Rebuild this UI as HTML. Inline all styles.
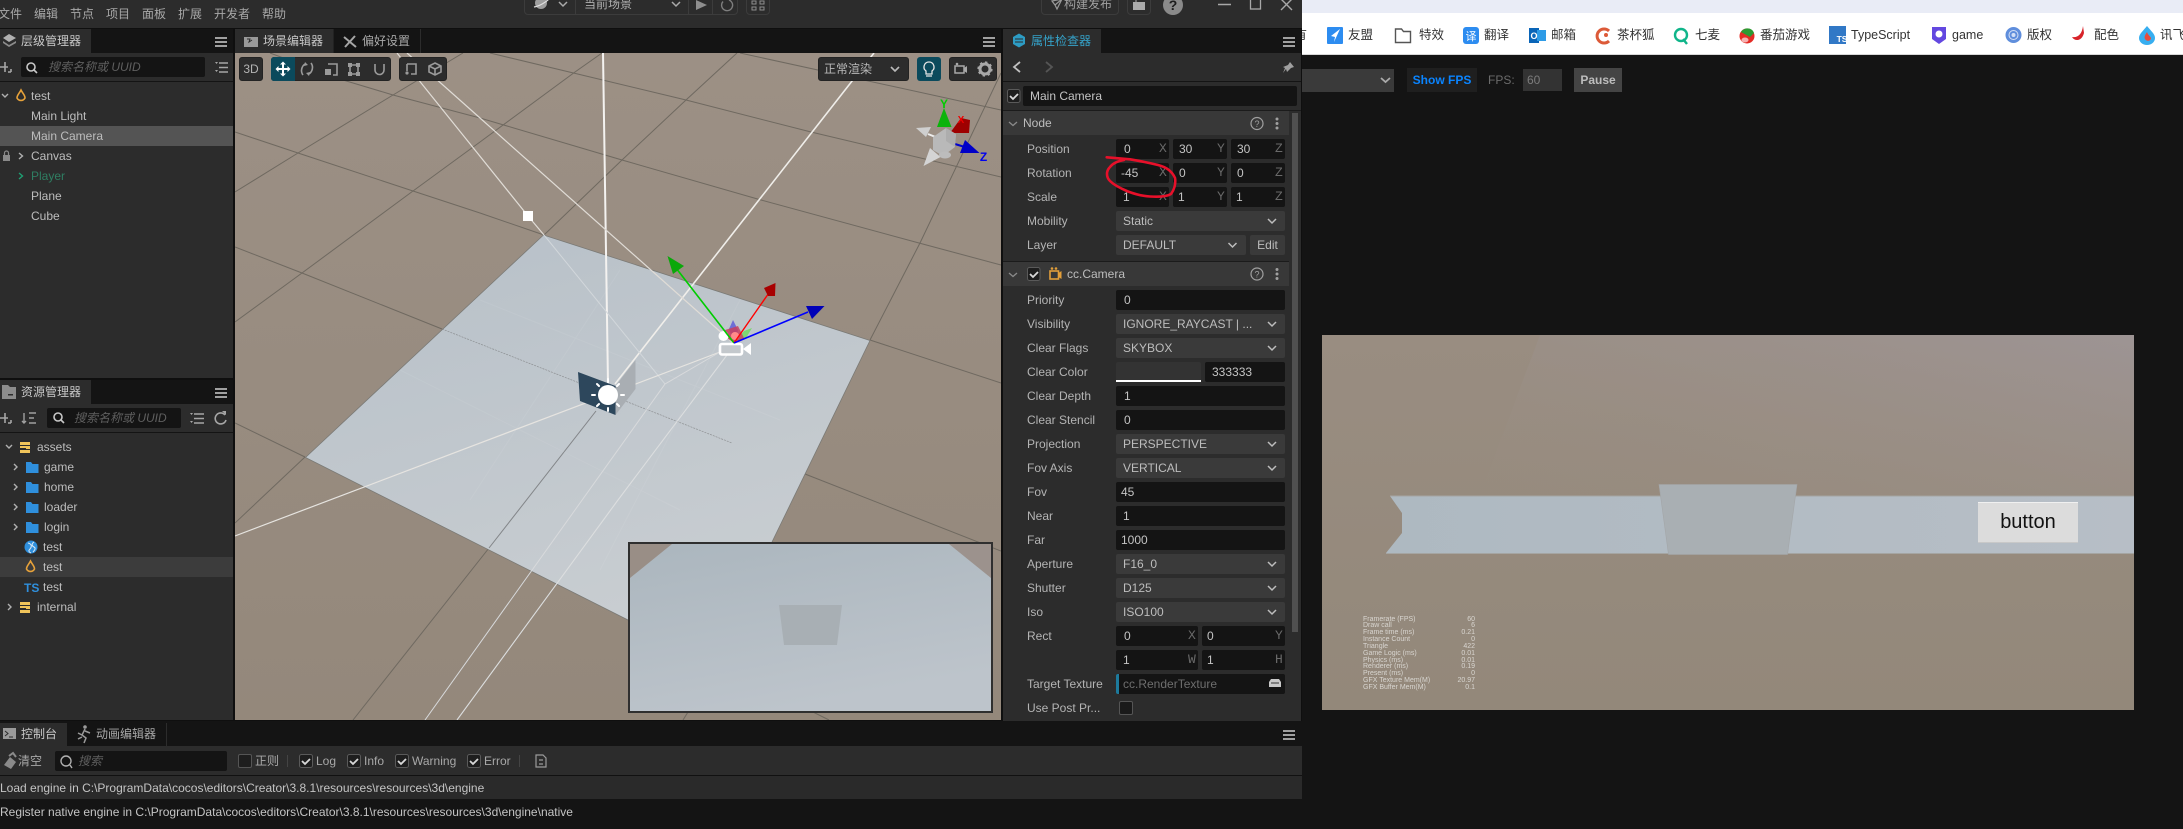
<!DOCTYPE html>
<html><head><meta charset="utf-8"><style>
html,body{margin:0;padding:0;background:#141414;}
body{position:relative;width:2183px;height:829px;overflow:hidden;font:12px "Liberation Sans","Noto Sans CJK SC",sans-serif;color:#bdbdbd;}
.a,.t,.l,.i,.s,.b{position:absolute;}
.t{white-space:nowrap;height:20px;line-height:20px;}
.l{left:1027px;height:20px;line-height:20px;white-space:nowrap;color:#b4b4b4;}
.i{background:#141414;border-radius:2px;height:20px;line-height:20px;color:#c4c4c4;white-space:nowrap;box-sizing:border-box;}
.s{background:#3a3a3a;border-radius:2px;height:20px;line-height:20px;color:#bdbdbd;left:1116px;width:169px;padding-left:7px;box-sizing:border-box;white-space:nowrap;}
.m{position:absolute;font:13px "Liberation Mono",monospace;color:#6a6a6a;height:20px;line-height:20px;}
.tb{position:absolute;background:#2c2c2c;border:1px solid #232323;border-radius:3px;box-sizing:border-box;}
.bm{position:absolute;top:25px;height:20px;line-height:20px;font-size:12.5px;color:#333;white-space:nowrap;}
.st{position:absolute;font-size:7px;line-height:7px;color:#d8d5d0;white-space:nowrap;}
</style></head><body>
<!-- browser -->
<div class="a" style="left:1302px;top:0;width:881px;height:13px;background:#e9ecf6"></div>
<div class="a" style="left:1302px;top:13px;width:881px;height:41px;background:#fff"></div>
<div class="a" style="left:1302px;top:54px;width:881px;height:1px;background:#d8d8d8"></div>
<div class="bm" style="left:1302px;width:5px;overflow:hidden;direction:rtl">有</div>
<div class="bm" style="left:1348px">友盟</div>
<div class="bm" style="left:1419px">特效</div>
<div class="bm" style="left:1484px">翻译</div>
<div class="bm" style="left:1551px">邮箱</div>
<div class="bm" style="left:1617px">茶杯狐</div>
<div class="bm" style="left:1695px">七麦</div>
<div class="bm" style="left:1760px">番茄游戏</div>
<div class="bm" style="left:1851px">TypeScript</div>
<div class="bm" style="left:1952px">game</div>
<div class="bm" style="left:2027px">版权</div>
<div class="bm" style="left:2094px">配色</div>
<div class="bm" style="left:2160px">讯飞</div>
<!-- browser toolbar -->
<div class="a" style="left:1302px;top:69px;width:92px;height:23px;background:#3a3a3a"></div>
<div class="a" style="left:1407px;top:68px;width:70px;height:24px;background:#1f1f1f;color:#0a84ff;font-weight:bold;font-size:12px;line-height:24px;text-align:center">Show FPS</div>
<div class="t" style="left:1488px;top:70px;color:#6b6b6b">FPS:</div>
<div class="a" style="left:1523px;top:69px;width:39px;height:22px;background:#333;color:#7c7c7c;line-height:22px;padding-left:4px;box-sizing:border-box">60</div>
<div class="a" style="left:1574px;top:68px;width:48px;height:24px;background:#444;color:#bdbdbd;font-weight:bold;font-size:12px;line-height:24px;text-align:center">Pause</div>
<!-- game view -->
<svg class="a" style="left:1322px;top:335px" width="812" height="375" viewBox="1322 335 812 375">
<defs><linearGradient id="gb" x1="0" y1="0" x2="0" y2="1"><stop offset="0" stop-color="#998d81"/><stop offset="1" stop-color="#93887a"/></linearGradient>
<linearGradient id="gh" x1="0" y1="0" x2="1" y2="0"><stop offset="0" stop-color="#aeb9c1"/><stop offset="1" stop-color="#b7bec6"/></linearGradient>
<linearGradient id="gl" x1="0" y1="1" x2="1" y2="0"><stop offset="0" stop-color="#9a8e82" stop-opacity="0"/><stop offset="1" stop-color="#9d9494"/></linearGradient></defs>
<rect x="1322" y="335" width="812" height="375" fill="url(#gb)"/>
<polygon points="1540,335 2134,335 2134,495 1480,495" fill="url(#gl)"/>
<polygon points="1390,496 2134,496 2134,553 1386,553 1402,533 1402,513" fill="url(#gh)"/>
<path d="M1390 496H2134M1386 553.500H2134" stroke="#a5a5a2" stroke-width="1"/>
<polygon points="1659,484.500 1797,484.500 1787.500,554.500 1668.500,554.500" fill="#a9afb3" stroke="#a3a6a8" stroke-width=".6"/>
</svg>
<div class="a" style="left:1978px;top:502px;width:100px;height:41px;background:#dcdcdc;border-top:1px solid #f0f0f0;border-bottom:1px solid #c8c8c8;box-sizing:border-box;color:#111;font:20px/39px 'Liberation Sans',sans-serif;text-align:center">button</div>
<div class="st" style="left:1363px;top:616px">Framerate (FPS)</div><div class="st" style="left:1440px;top:616px;width:35px;text-align:right">60</div>
<div class="st" style="left:1363px;top:622px">Draw call</div><div class="st" style="left:1440px;top:622px;width:35px;text-align:right">6</div>
<div class="st" style="left:1363px;top:629px">Frame time (ms)</div><div class="st" style="left:1440px;top:629px;width:35px;text-align:right">0.21</div>
<div class="st" style="left:1363px;top:636px">Instance Count</div><div class="st" style="left:1440px;top:636px;width:35px;text-align:right">0</div>
<div class="st" style="left:1363px;top:643px">Triangle</div><div class="st" style="left:1440px;top:643px;width:35px;text-align:right">422</div>
<div class="st" style="left:1363px;top:650px">Game Logic (ms)</div><div class="st" style="left:1440px;top:650px;width:35px;text-align:right">0.01</div>
<div class="st" style="left:1363px;top:657px">Physics (ms)</div><div class="st" style="left:1440px;top:657px;width:35px;text-align:right">0.01</div>
<div class="st" style="left:1363px;top:663px">Renderer (ms)</div><div class="st" style="left:1440px;top:663px;width:35px;text-align:right">0.19</div>
<div class="st" style="left:1363px;top:670px">Present (ms)</div><div class="st" style="left:1440px;top:670px;width:35px;text-align:right">0</div>
<div class="st" style="left:1363px;top:677px">GFX Texture Mem(M)</div><div class="st" style="left:1440px;top:677px;width:35px;text-align:right">20.97</div>
<div class="st" style="left:1363px;top:684px">GFX Buffer Mem(M)</div><div class="st" style="left:1440px;top:684px;width:35px;text-align:right">0.1</div>

<!-- editor window -->
<div class="a" style="left:0;top:0;width:1302px;height:829px;background:#0f0f0f"></div>
<div class="a" style="left:0;top:0;width:1302px;height:28px;background:#2c2c2c"></div>
<div class="t" style="left:-2px;top:4px;color:#a8a8a8">文件</div>
<div class="t" style="left:34px;top:4px;color:#a8a8a8">编辑</div>
<div class="t" style="left:70px;top:4px;color:#a8a8a8">节点</div>
<div class="t" style="left:106px;top:4px;color:#a8a8a8">项目</div>
<div class="t" style="left:142px;top:4px;color:#a8a8a8">面板</div>
<div class="t" style="left:178px;top:4px;color:#a8a8a8">扩展</div>
<div class="t" style="left:214px;top:4px;color:#a8a8a8">开发者</div>
<div class="t" style="left:262px;top:4px;color:#a8a8a8">帮助</div>
<!-- top toolbar -->
<div class="a" style="left:524px;top:-8px;width:214px;height:23px;border:1px solid #3c3c3c;border-radius:4px;box-sizing:border-box"></div>
<div class="a" style="left:575px;top:0;width:1px;height:15px;background:#3c3c3c"></div>
<div class="a" style="left:688px;top:0;width:1px;height:15px;background:#3c3c3c"></div>
<div class="a" style="left:712px;top:0;width:1px;height:15px;background:#3c3c3c"></div>
<div class="a" style="left:746px;top:-8px;width:24px;height:23px;border:1px solid #3c3c3c;border-radius:4px;box-sizing:border-box"></div>
<div class="a" style="left:1041px;top:-8px;width:78px;height:23px;border:1px solid #3c3c3c;border-radius:4px;box-sizing:border-box"></div>
<div class="a" style="left:1127px;top:-8px;width:24px;height:23px;border:1px solid #3c3c3c;border-radius:4px;box-sizing:border-box"></div>
<div class="t" style="left:584px;top:-6px;color:#b0b0b0">当前场景</div>
<div class="t" style="left:1064px;top:-6px;color:#a0a0a0">构建发布</div>

<!-- hierarchy -->
<div class="a" style="left:0;top:29px;width:233px;height:349px;background:#2c2c2c"></div>
<div class="a" style="left:0;top:29px;width:233px;height:24px;background:#141414"></div>
<div class="a" style="left:0;top:29px;width:91px;height:24px;background:#2c2c2c"></div>
<div class="t" style="left:21px;top:31px;color:#c8c8c8">层级管理器</div>
<div class="a" style="left:0;top:81px;width:233px;height:1px;background:#141414"></div>
<div class="a" style="left:21px;top:57px;width:184px;height:20px;background:#141414;border-radius:2px"></div>
<div class="t" style="left:48px;top:57px;color:#5f5f5f;font-style:italic">搜索名称或 UUID</div>
<div class="a" style="left:0;top:126px;width:233px;height:20px;background:#545454"></div>
<div class="t" style="left:31px;top:86px">test</div>
<div class="t" style="left:31px;top:106px">Main Light</div>
<div class="t" style="left:31px;top:126px">Main Camera</div>
<div class="t" style="left:31px;top:146px">Canvas</div>
<div class="t" style="left:31px;top:166px;color:#2f7e62">Player</div>
<div class="t" style="left:31px;top:186px">Plane</div>
<div class="t" style="left:31px;top:206px">Cube</div>

<!-- assets -->
<div class="a" style="left:0;top:380px;width:233px;height:340px;background:#2c2c2c"></div>
<div class="a" style="left:0;top:380px;width:233px;height:24px;background:#141414"></div>
<div class="a" style="left:0;top:380px;width:91px;height:24px;background:#2c2c2c"></div>
<div class="t" style="left:21px;top:382px;color:#c8c8c8">资源管理器</div>
<div class="a" style="left:0;top:432px;width:233px;height:1px;background:#141414"></div>
<div class="a" style="left:47px;top:408px;width:134px;height:20px;background:#141414;border-radius:2px"></div>
<div class="t" style="left:74px;top:408px;color:#5f5f5f;font-style:italic">搜索名称或 UUID</div>
<div class="a" style="left:0;top:557px;width:233px;height:20px;background:#3c3c3c"></div>
<div class="t" style="left:37px;top:437px">assets</div>
<div class="t" style="left:44px;top:457px">game</div>
<div class="t" style="left:44px;top:477px">home</div>
<div class="t" style="left:44px;top:497px">loader</div>
<div class="t" style="left:44px;top:517px">login</div>
<div class="t" style="left:43px;top:537px">test</div>
<div class="t" style="left:43px;top:557px">test</div>
<div class="t" style="left:43px;top:577px">test</div>
<div class="t" style="left:37px;top:597px">internal</div>

<!-- scene tabs -->
<div class="a" style="left:235px;top:29px;width:766px;height:24px;background:#141414"></div>
<div class="a" style="left:235px;top:29px;width:98px;height:24px;background:#2c2c2c"></div>
<div class="a" style="left:420px;top:29px;width:1px;height:24px;background:#2c2c2c"></div>
<div class="a" style="left:333px;top:29px;width:1px;height:24px;background:#222"></div>
<div class="t" style="left:263px;top:31px;color:#c8c8c8">场景编辑器</div>
<div class="t" style="left:362px;top:31px;color:#a8a8a8">偏好设置</div>

<!-- scene -->
<svg class="a" style="left:235px;top:53px" width="766" height="667" viewBox="235 53 766 667">
<defs>
<linearGradient id="sb" x1="0" y1="0" x2="0" y2="1"><stop offset="0" stop-color="#9c9085"/><stop offset="1" stop-color="#94887b"/></linearGradient>
<linearGradient id="pl" x1="0" y1="0" x2=".4" y2="1"><stop offset="0" stop-color="#b7c0c8"/><stop offset="1" stop-color="#c8cdd1"/></linearGradient>
<linearGradient id="pv" x1="0" y1="0" x2=".4" y2="1"><stop offset="0" stop-color="#abb6be"/><stop offset="1" stop-color="#bdc4cb"/></linearGradient>
</defs>
<rect x="235" y="53" width="766" height="667" fill="url(#sb)"/>
<g stroke="#6f6960" stroke-width="1" fill="none">
<path d="M490 53L686 100L811 132L1001 177"/>
<path d="M740 53L1001 110"/>
<path d="M270 53L343 80L393 95L480 118L622 160L761 200L919 243L1001 265"/>
<path d="M235 132L298 153L413 191L480 213L544 235"/>
<path d="M870 340L1001 383"/>
<path d="M235 247L302 273L442 329"/>
<path d="M805 474L1001 551"/>
<path d="M235 423L305 457"/>
<path d="M628 620L829 720"/>
<path d="M235 192L298 153L393 95L463 53"/>
<path d="M235 322L302 273L413 191L480 142L575 72L602 53"/>
<path d="M544 235L622 160L686 100L737 53"/>
<path d="M305 457L235 523"/>
<path d="M870 340L920 243L1001 73"/>
<path d="M489 548L353 720"/>
<path d="M688 712L683 720"/>
</g>
<polygon points="543.500,235 870,340.500 772,542 740,640 628,620 305.500,457.500" fill="url(#pl)"/>
<path d="M543.500 235L305.500 457.500L628 620M543.500 235L870 340.500L772 542" stroke="#7a7a76" stroke-width=".8" fill="none"/>
<path d="M442 329L732 443" stroke="#77797a" stroke-width=".7" stroke-dasharray="2 1" fill="none" opacity=".7"/>
<path d="M489 548L596 411" stroke="#6c6e70" stroke-width="1" fill="none" opacity=".75"/>
<g stroke="#fff" fill="none" stroke-opacity=".07" stroke-width="1">
<path d="M400 370L680 510M480 300L780 420M620 270L470 500M740 300L600 570"/>
</g>
<!-- frustum lines -->
<g fill="none">
<path d="M603 53L608 384" stroke-width="2" stroke="#f4f2f0"/>
<path d="M874 53L615 384" stroke-width="1.600" stroke="#f0eeea"/>
<path d="M397 53L528 216L544 235" stroke-width="1.200" stroke="#e0dcd6"/>
<path d="M544 235L665 384" stroke-width="1" stroke="#d2d7db"/>
<path d="M407 53L480 118L733 343" stroke-width="1.200" stroke="#e0dcd6"/>
<path d="M720 352L235 536" stroke-width="1.200" stroke="#e6e4e0"/>
<path d="M720 352L665 384L425 720" stroke-width="1" stroke="#d8dadc"/>
<path d="M727 355L618 500L457 720" stroke-width="1.100" stroke="#dcdedf"/>
</g>
<rect x="523" y="211" width="10" height="10" fill="#fff"/>
<!-- light -->
<polygon points="615.500,386 635.500,360 635.500,389 615.500,415" fill="#a9aeb3"/>
<polygon points="578,372 615.500,386 615.500,415 580,401" fill="#2d475c"/>
<circle cx="608" cy="395" r="10" fill="#fff"/>
<g stroke="#fff" stroke-width="2" stroke-linecap="round">
<path d="M608 379V382M608 408V411M592 395H595M621 395H624M597 384L599 386M617 404L619 406M597 406L599 404M617 386L619 384"/>
</g>
<!-- camera gizmo -->
<polygon points="729,329 733,320 738,330 734,343" fill="#5a58d8" opacity=".8"/>
<polygon points="734,343 744,331 752,328 746,338" fill="#66dd55" opacity=".75"/>
<polygon points="725,330 738,326 744,338 734,343 727,338" fill="#c8405f" opacity=".85"/>
<circle cx="735" cy="336" r="4" fill="#ff8a8a"/>
<circle cx="723.500" cy="336" r="5" fill="#fff"/>
<rect x="720" y="344" width="22" height="10.500" rx="2" fill="#c3c8cc" stroke="#fff" stroke-width="2.600"/>
<polygon points="743,349 751,343 751,355" fill="#fff"/>
<path d="M734 343L676 268" stroke="#0c0" stroke-width="1.600"/>
<polygon points="667.500,256 684,266 673,274" fill="#0aa80a"/>
<path d="M734 343L771 290" stroke="#f00" stroke-width="1.400"/>
<polygon points="775.500,283 775,296 768,296 764,288" fill="#a80000"/>
<path d="M734 343L808 312" stroke="#00f" stroke-width="1.600"/>
<polygon points="824.500,306 806,306 812,319" fill="#0000b8"/>
<!-- nav gizmo -->
<polygon points="961,118 970,120 969,133 950,133" fill="#9e0000"/>
<polygon points="944,108 937,127 951.500,127" fill="#0bb30b"/>
<polygon points="916,128 931,127 926,137" fill="#cfcfcf"/>
<path d="M928 134L938 138" stroke="#eee" stroke-width="2"/>
<path d="M955 144L968 148" stroke="#0000d0" stroke-width="2"/>
<polygon points="979.500,153 965,140 960,153" fill="#0000c8"/>
<polygon points="933,137 946,128 956,134 955,147 943,156 933,150" fill="#b9b9b9"/>
<polygon points="946,128 956,134 955,147 946,141" fill="#a8a8a8" opacity=".7"/>
<polygon points="923.500,166 930,148 940.500,157" fill="#d4d4d4"/>
<ellipse cx="945" cy="155" rx="6" ry="3.500" fill="#bcbcbc"/>
<text x="944" y="108" font-family="Liberation Sans" font-size="12" font-weight="bold" fill="#0c0" text-anchor="middle">Y</text>
<text x="961" y="123" font-family="Liberation Sans" font-size="10" font-weight="bold" fill="#e00" text-anchor="middle">X</text>
<text x="983.500" y="161" font-family="Liberation Sans" font-size="12" font-weight="bold" fill="#00e" text-anchor="middle">Z</text>
<!-- preview -->
<rect x="628" y="542" width="365" height="171" fill="#2f2f2f"/>
<rect x="630" y="544" width="361" height="167" fill="url(#pv)"/>
<polygon points="630,544 672,544 630,578" fill="#998e86"/>
<polygon points="949,544 991,544 991,578" fill="#9c928d"/>
<polygon points="779,605 842,605 837,645 784,645" fill="#a8afb4"/>
</svg>

<!-- scene toolbar -->
<div class="tb" style="left:239px;top:57px;width:24px;height:24px;color:#b4b4b4;line-height:22px;text-align:center;font-size:12px">3D</div>
<div class="tb" style="left:271px;top:57px;width:120px;height:24px"></div>
<div class="a" style="left:271px;top:57px;width:24px;height:24px;background:#0b4a5c;border-radius:3px 0 0 3px"></div>
<div class="tb" style="left:399px;top:57px;width:48px;height:24px"></div>
<div class="tb" style="left:818px;top:57px;width:91px;height:24px;color:#b8b8b8;line-height:22px;padding-left:5px">正常渲染</div>
<div class="a" style="left:917px;top:57px;width:24px;height:24px;background:#0b4a5c;border-radius:3px"></div>
<div class="tb" style="left:949px;top:57px;width:48px;height:24px"></div>

<!-- inspector -->
<div class="a" style="left:1003px;top:29px;width:298px;height:692px;background:#2c2c2c"></div>
<div class="a" style="left:1003px;top:29px;width:298px;height:24px;background:#141414"></div>
<div class="a" style="left:1003px;top:29px;width:98px;height:24px;background:#2c2c2c"></div>
<div class="t" style="left:1031px;top:31px;color:#35a2c9">属性检查器</div>
<div class="a" style="left:1003px;top:81px;width:298px;height:1px;background:#141414"></div>
<div class="a" style="left:1003px;top:110px;width:298px;height:1px;background:#1b1b1b"></div>
<div class="i" style="left:1023px;top:86px;width:274px;padding-left:7px">Main Camera</div>
<div class="a" style="left:1003px;top:111px;width:286px;height:24px;background:#383838"></div>
<div class="t" style="left:1023px;top:113px">Node</div>
<div class="a" style="left:1003px;top:261px;width:286px;height:1px;background:#1b1b1b"></div>
<div class="a" style="left:1003px;top:262px;width:286px;height:24px;background:#383838"></div>
<div class="t" style="left:1067px;top:264px">cc.Camera</div>
<div class="a" style="left:1292px;top:113px;width:6px;height:519px;background:#505050"></div>

<div class="l" style="top:139px">Position</div>
<div class="i" style="left:1116px;top:139px;width:53px;padding-left:8px">0</div>
<div class="i" style="left:1173px;top:139px;width:54px;padding-left:6px">30</div>
<div class="i" style="left:1231px;top:139px;width:54px;padding-left:6px">30</div>
<div class="m" style="left:1159px;top:139px">X</div><div class="m" style="left:1217px;top:139px">Y</div><div class="m" style="left:1275px;top:139px">Z</div>
<div class="l" style="top:163px">Rotation</div>
<div class="i" style="left:1116px;top:163px;width:53px;padding-left:5px">-45</div>
<div class="i" style="left:1173px;top:163px;width:54px;padding-left:6px">0</div>
<div class="i" style="left:1231px;top:163px;width:54px;padding-left:6px">0</div>
<div class="m" style="left:1159px;top:163px">X</div><div class="m" style="left:1217px;top:163px">Y</div><div class="m" style="left:1275px;top:163px">Z</div>
<div class="l" style="top:187px">Scale</div>
<div class="i" style="left:1116px;top:187px;width:53px;padding-left:7px">1</div>
<div class="i" style="left:1173px;top:187px;width:54px;padding-left:5px">1</div>
<div class="i" style="left:1231px;top:187px;width:54px;padding-left:5px">1</div>
<div class="m" style="left:1159px;top:187px">X</div><div class="m" style="left:1217px;top:187px">Y</div><div class="m" style="left:1275px;top:187px">Z</div>
<div class="l" style="top:211px">Mobility</div><div class="s" style="top:211px">Static</div>
<div class="l" style="top:235px">Layer</div><div class="s" style="top:235px;width:130px">DEFAULT</div>
<div class="s" style="top:235px;left:1250px;width:35px;padding:0;text-align:center">Edit</div>
<div class="l" style="top:290px">Priority</div><div class="i" style="left:1116px;top:290px;width:169px;padding-left:8px">0</div>
<div class="l" style="top:314px">Visibility</div><div class="s" style="top:314px">IGNORE_RAYCAST | ...</div>
<div class="l" style="top:338px">Clear Flags</div><div class="s" style="top:338px">SKYBOX</div>
<div class="l" style="top:362px">Clear Color</div>
<div class="a" style="left:1116px;top:362px;width:85px;height:20px;background:#333;border-bottom:2px solid #fff;box-sizing:border-box;border-radius:2px 2px 0 0"></div>
<div class="i" style="left:1205px;top:362px;width:80px;padding-left:7px">333333</div>
<div class="l" style="top:386px">Clear Depth</div><div class="i" style="left:1116px;top:386px;width:169px;padding-left:8px">1</div>
<div class="l" style="top:410px">Clear Stencil</div><div class="i" style="left:1116px;top:410px;width:169px;padding-left:8px">0</div>
<div class="l" style="top:434px">Projection</div><div class="s" style="top:434px">PERSPECTIVE</div>
<div class="l" style="top:458px">Fov Axis</div><div class="s" style="top:458px">VERTICAL</div>
<div class="l" style="top:482px">Fov</div><div class="i" style="left:1116px;top:482px;width:169px;padding-left:5px">45</div>
<div class="l" style="top:506px">Near</div><div class="i" style="left:1116px;top:506px;width:169px;padding-left:7px">1</div>
<div class="l" style="top:530px">Far</div><div class="i" style="left:1116px;top:530px;width:169px;padding-left:5px">1000</div>
<div class="l" style="top:554px">Aperture</div><div class="s" style="top:554px">F16_0</div>
<div class="l" style="top:578px">Shutter</div><div class="s" style="top:578px">D125</div>
<div class="l" style="top:602px">Iso</div><div class="s" style="top:602px">ISO100</div>
<div class="l" style="top:626px">Rect</div>
<div class="i" style="left:1116px;top:626px;width:82px;padding-left:8px">0</div>
<div class="i" style="left:1202px;top:626px;width:83px;padding-left:5px">0</div>
<div class="m" style="left:1188px;top:626px">X</div><div class="m" style="left:1275px;top:626px">Y</div>
<div class="i" style="left:1116px;top:650px;width:82px;padding-left:7px">1</div>
<div class="i" style="left:1202px;top:650px;width:83px;padding-left:5px">1</div>
<div class="m" style="left:1188px;top:650px">W</div><div class="m" style="left:1275px;top:650px">H</div>
<div class="l" style="top:674px">Target Texture</div>
<div class="i" style="left:1116px;top:674px;width:169px;color:#6e6e6e;border-left:3px solid #1d7a9c;padding-left:4px">cc.RenderTexture</div>
<div class="l" style="top:698px">Use Post Pr...</div>
<div class="a" style="left:1119px;top:701px;width:14px;height:14px;background:#1a1a1a;border:1px solid #555;border-radius:2px;box-sizing:border-box"></div>

<!-- console -->
<div class="a" style="left:0;top:721px;width:1302px;height:25px;background:#141414"></div>
<div class="a" style="left:0;top:723px;width:67px;height:23px;background:#2c2c2c"></div>
<div class="a" style="left:166px;top:723px;width:1px;height:23px;background:#2c2c2c"></div>
<div class="t" style="left:21px;top:724px;color:#c8c8c8">控制台</div>
<div class="t" style="left:96px;top:724px;color:#a8a8a8">动画编辑器</div>
<div class="a" style="left:0;top:746px;width:1302px;height:29px;background:#2c2c2c"></div>
<div class="a" style="left:0;top:775px;width:1302px;height:1px;background:#111"></div>
<div class="t" style="left:18px;top:751px;color:#a8a8a8">清空</div>
<div class="a" style="left:55px;top:751px;width:172px;height:20px;background:#141414;border-radius:2px"></div>
<div class="t" style="left:78px;top:751px;color:#5f5f5f;font-style:italic">搜索</div>
<div class="a" style="left:238px;top:754px;width:14px;height:14px;background:#1e1e1e;border:1px solid #555;border-radius:2px;box-sizing:border-box"></div>
<div class="t" style="left:255px;top:751px;color:#a8a8a8">正则</div>
<div class="a" style="left:287px;top:755px;width:1px;height:12px;background:#444"></div>
<div class="t" style="left:316px;top:751px;color:#a8a8a8">Log</div>
<div class="t" style="left:364px;top:751px;color:#a8a8a8">Info</div>
<div class="t" style="left:412px;top:751px;color:#a8a8a8">Warning</div>
<div class="t" style="left:484px;top:751px;color:#a8a8a8">Error</div>
<div class="a" style="left:519px;top:755px;width:1px;height:12px;background:#444"></div>
<div class="a" style="left:0;top:776px;width:1302px;height:23px;background:#2a2a2a"></div>
<div class="a" style="left:0;top:799px;width:1302px;height:30px;background:#141414"></div>
<div class="t" style="left:0;top:778px;color:#c4c4c4">Load engine in C:\ProgramData\cocos\editors\Creator\3.8.1\resources\resources\3d\engine</div>
<div class="t" style="left:0;top:802px;color:#c4c4c4">Register native engine in C:\ProgramData\cocos\editors\Creator\3.8.1\resources\resources\3d\engine\native</div>

<!-- icon overlay -->
<svg class="a" style="left:0;top:0;pointer-events:none" width="2183" height="829" viewBox="0 0 2183 829">
<g fill="#a0a0a0">
<path d="M215 37h12v2h-12zM215 41h12v2h-12zM215 45h12v2h-12zM215 388h12v2h-12zM215 392h12v2h-12zM215 396h12v2h-12zM983 37h12v2h-12zM983 41h12v2h-12zM983 45h12v2h-12zM1283 37h12v2h-12zM1283 41h12v2h-12zM1283 45h12v2h-12zM1283 730h12v2h-12zM1283 734h12v2h-12zM1283 738h12v2h-12z"/>
</g>
<path d="M9 34L16 38L9 42L3 38Z" fill="#b0b0b0"/><path d="M3 41L9 45L16 41V43L9 47L3 43Z" fill="#8c8c8c"/>
<rect x="244" y="37" width="14" height="10" fill="#9a9a9a"/><path d="M247 39L250 39L249 42L252 40" stroke="#2c2c2c" fill="none"/>
<path d="M344 37L356 47M355 36L345 47" stroke="#a6a6a6" stroke-width="2" fill="none"/>
<path d="M2 385h6l2 2h6v12H2z" fill="#8c8c8c"/><rect x="8" y="394" width="5" height="1.500" fill="#2c2c2c"/>
<path d="M0 67h8M5 62v10M8 72h3M11 69v3" stroke="#a6a6a6" stroke-width="1.600" fill="none"/>
<path d="M0 418h8M5 413v10M8 423h3M11 420v3" stroke="#a6a6a6" stroke-width="1.600" fill="none"/>
<g fill="none" stroke="#c8c8c8" stroke-width="1.600"><circle cx="31" cy="67" r="4"/><path d="M34 70L37 73"/><circle cx="58" cy="417" r="4"/><path d="M61 420L64 423"/></g>
<g fill="none" stroke="#b0b0b0" stroke-width="1.400"><circle cx="66" cy="761" r="5"/><path d="M70 765L72 768"/></g>
<path d="M219 63h9M219 67.500h9M219 72h9M194 414h10M194 418.500h10M194 423h10" stroke="#a6a6a6" stroke-width="1.400"/>
<path d="M215 62h3l-1.500 2zM215 70h3l-1.500 2zM190 413h3l-1.500 2zM190 421h3l-1.500 2z" fill="#a6a6a6"/>
<path d="M24 413v10M22 421l2 2 2-2M29 413h7M29 418h5M29 423h7" stroke="#a0a0a0" stroke-width="1.400" fill="none"/>
<path d="M225 415A5.500 5.500 0 1 0 226 420" stroke="#a6a6a6" stroke-width="1.600" fill="none"/><path d="M222 411l4 0v4z" fill="#a6a6a6"/>
<g fill="none" stroke="#b0b0b0" stroke-width="1.400">
<path d="M2 94L5 97L8 94"/><path d="M19 153L22.500 156L19 159"/>
<path d="M6 445L9 448L12 445"/>
<path d="M14 464L17 467L14 470M14 484L17 487L14 490M14 504L17 507L14 510M14 524L17 527L14 530M8 604L11 607L8 610"/>
</g>
<path d="M19 173L22.500 176L19 179" fill="none" stroke="#1f9e72" stroke-width="1.400"/>
<g fill="none" stroke="#e7a23a" stroke-width="1.600"><path d="M21 90C19 94 17 95 17 98A4.500 4.500 0 0 0 25 98C25 95 23 94 21 90Z"/><path d="M30.500 561C28.500 565 26.500 566 26.500 569A4.500 4.500 0 0 0 34.500 569C34.500 566 32.500 565 30.500 561Z"/></g>
<path d="M3 155h7v6H3z" fill="#8a8a8a"/><path d="M4.500 155v-2a2 2 0 0 1 4 0v2" fill="none" stroke="#8a8a8a" stroke-width="1.200"/>
<g fill="#f0c45a"><path d="M20 442h10v3h-10zM20 446h10v3h-4v-1h-6zM20 450h10v3h-10zM20 602h10v3h-10zM20 606h10v3h-4v-1h-6zM20 610h10v3h-10z"/></g>
<g fill="#2f8fdc"><path d="M26 462h5l1.500 2h6v9H26zM26 482h5l1.500 2h6v9H26zM26 502h5l1.500 2h6v9H26zM26 522h5l1.500 2h6v9H26z"/></g>
<circle cx="31" cy="547" r="6.500" fill="#2f8fdc"/><path d="M28 543c4 1 4 4 2 6s-1 3 1 4M34 542c-3 2-2 4 0 5s1 3-1 5" stroke="#d8e8f4" fill="none"/>
<text x="24" y="592" font-family="Liberation Sans" font-size="12" font-weight="bold" fill="#2f8fdc">TS</text>
<!-- scene tool icons -->
<path d="M283 63V75M277 69H289" stroke="#fff" stroke-width="2"/>
<path d="M283 61.500l3 3h-6zM283 76.500l3-3h-6zM275.500 69l3-3v6zM290.500 69l-3-3v6z" fill="#fff"/>
<g fill="none" stroke="#9a9a9a" stroke-width="1.600">
<path d="M303 75C300 71 302 66 305 64"/><path d="M311 63C314 67 312 72 309 74"/>
<path d="M328 64h9v11h-4"/>
<path d="M350 65h8v9h-8z"/>
<path d="M375 64v6a4.500 4.500 0 0 0 9 0v-6"/>
<path d="M407 64h9v10h-5M407 64v7"/>
<path d="M435 63l6 3v6l-6 3-6-3v-6zM429 66l6 3 6-3M435 69v6"/>
</g>
<g fill="#9a9a9a"><path d="M305 62l3 3-4 1zM309 76l-3-3 4-1z"/><rect x="325" y="69" width="6" height="6"/><rect x="348" y="63" width="4" height="4"/><rect x="356" y="63" width="4" height="4"/><rect x="348" y="72" width="4" height="4"/><rect x="356" y="72" width="4" height="4"/><circle cx="407" cy="73" r="1.600"/></g>
<path d="M891 67L895 71L899 67" fill="none" stroke="#bbb" stroke-width="1.600"/>
<path d="M929 62a5 5 0 0 1 3 9v3h-6v-3a5 5 0 0 1 3-9zM926 76h6" fill="none" stroke="#e6e6e6" stroke-width="1.300"/>
<rect x="955" y="66" width="9" height="7" fill="none" stroke="#a8a8a8" stroke-width="1.500"/><path d="M964 68l3-2v7l-3-2z" fill="#a8a8a8"/><circle cx="957" cy="64" r="1.300" fill="#a8a8a8"/>
<circle cx="985" cy="69" r="5" fill="none" stroke="#a8a8a8" stroke-width="3"/><circle cx="985" cy="69" r="6.800" fill="none" stroke="#a8a8a8" stroke-width="1.600" stroke-dasharray="2.500 2.800"/>
<!-- top toolbar icons -->
<ellipse cx="541" cy="3" rx="6" ry="6" fill="#9e9e9e"/><path d="M534 7C540 6 546 2 549 -1" stroke="#e0e0e0" stroke-width="1.200" fill="none"/>
<path d="M559 2L563 6L567 2M672 2L676 6L680 2" fill="none" stroke="#aaa" stroke-width="1.500"/>
<path d="M696 0L707 5L696 10Z" fill="#8e8e8e"/>
<path d="M729 0a5.500 5.500 0 1 1-6 1.500" stroke="#7e7e7e" stroke-width="1.400" fill="none"/>
<path d="M752 1h4v3h-4zM760 1h4v3h-4zM752 7h4v3h-4zM760 7h4v3h-4z" fill="none" stroke="#8e8e8e"/>
<path d="M1052 1L1062 -1L1057 9L1055 5ZM1055 5L1062 -1" fill="none" stroke="#999" stroke-width="1.200"/>
<path d="M1133 2h12v8h-12z" fill="#aaa"/><path d="M1136 2v-3h8" stroke="#aaa" fill="none"/>
<circle cx="1173" cy="5" r="10" fill="#8a8a8a"/><text x="1173" y="10" font-family="Liberation Sans" font-size="14" font-weight="bold" fill="#1c1c1c" text-anchor="middle">?</text>
<path d="M1218 4.500h13" stroke="#a8a8a8" stroke-width="1.500"/>
<rect x="1250.500" y="-2" width="10" height="11" fill="none" stroke="#a8a8a8" stroke-width="1.300"/>
<path d="M1281 -1L1292 10M1292 -1L1281 10" stroke="#a8a8a8" stroke-width="1.400"/>
<!-- inspector -->
<path d="M1019 33.500l6 3.500v7l-6 3.500-6-3.500v-7z" fill="#2d9cc4"/><path d="M1015 39h8M1015 42h8" stroke="#2c2c2c"/>
<path d="M1020 62L1014 67L1020 72" fill="none" stroke="#c0c0c0" stroke-width="1.800"/>
<path d="M1046 62L1052 67L1046 72" fill="none" stroke="#555" stroke-width="1.800"/>
<path d="M1290 62l4 5-3 1-4 4-1-3-3 4 2-5-2-1 5-2z" fill="#a0a0a0"/>
<g fill="#1e1e1e" stroke="#5a5a5a"><rect x="1007.500" y="89.500" width="12.500" height="13" rx="2"/><rect x="1027.500" y="267.500" width="12.500" height="13" rx="2"/></g>
<path d="M1010 96l3 3 5-5M1030 274l3 3 5-5" fill="none" stroke="#d8d8d8" stroke-width="1.800"/>
<path d="M1009 122L1013 125.500L1017 122M1009 273L1013 276.500L1017 273" fill="none" stroke="#8a8a8a" stroke-width="1.300"/>
<g fill="none" stroke="#a0a0a0" stroke-width="1.200"><circle cx="1257" cy="123.500" r="6"/><circle cx="1257" cy="274" r="6"/></g>
<g font-family="Liberation Sans" font-size="9" fill="#a0a0a0" text-anchor="middle"><text x="1257" y="127">?</text><text x="1257" y="277.500">?</text></g>
<g fill="#a0a0a0"><circle cx="1277" cy="119" r="1.500"/><circle cx="1277" cy="123.500" r="1.500"/><circle cx="1277" cy="128" r="1.500"/><circle cx="1277" cy="269.500" r="1.500"/><circle cx="1277" cy="274" r="1.500"/><circle cx="1277" cy="278.500" r="1.500"/></g>
<g fill="none" stroke="#e39f3a" stroke-width="1.600"><rect x="1050" y="271" width="8.500" height="8"/></g><path d="M1058.500 273l3-2v8l-3-2z" fill="#e39f3a"/><circle cx="1052" cy="268.500" r="1.300" fill="#e39f3a"/><circle cx="1056" cy="268.500" r="1.300" fill="#e39f3a"/>
<g fill="none" stroke="#bdbdbd" stroke-width="1.500"><path d="M1268 219L1272 223L1276 219M1228.500 243L1232.500 247L1236.500 243M1268 322L1272 326L1276 322M1268 346L1272 350L1276 346M1268 442L1272 446L1276 442M1268 466L1272 470L1276 466M1268 562L1272 566L1276 562M1268 586L1272 590L1276 586M1268 610L1272 614L1276 610"/></g>
<path d="M1271 679h8l2 3v5h-12v-5z" fill="#c8c8c8"/><path d="M1271 683h8" stroke="#333"/>
<path d="M1106.700 157.300L1130 159.300C1140 161 1150 163 1158 165C1166 167 1172 171 1175 178C1176 184 1174 190 1171 194C1166 197 1158 197 1150 196.500C1140 196 1132 193 1128 191.500C1122 189 1115 186 1110 181C1106 177 1106 171 1110 167C1113 163 1118 161 1124 160" fill="none" stroke="#e8102a" stroke-width="2.600" stroke-linejoin="round" stroke-linecap="round"/>
<!-- console icons -->
<rect x="3" y="728" width="13" height="11" fill="#9a9a9a"/><path d="M5 731l3 2.500-3 2.500M9 737h4" stroke="#2c2c2c" fill="none"/>
<circle cx="85" cy="727" r="1.800" fill="#9a9a9a"/><path d="M85 729L82 735L86 738L84 743M82 735L78 733M85 731L90 733M82 737L78 739" stroke="#9a9a9a" stroke-width="1.500" fill="none"/>
<path d="M4 765L10 757L16 762L11 769Z" fill="#8a8a8a"/><path d="M9 756L13 753L16 757" stroke="#8a8a8a" stroke-width="2" fill="none"/>
<g fill="#1e1e1e" stroke="#5a5a5a"><rect x="299.500" y="754.500" width="13" height="13" rx="2"/><rect x="347.500" y="754.500" width="13" height="13" rx="2"/><rect x="395.500" y="754.500" width="13" height="13" rx="2"/><rect x="467.500" y="754.500" width="13" height="13" rx="2"/></g>
<path d="M302 761l3 3 5-5M350 761l3 3 5-5M398 761l3 3 5-5M470 761l3 3 5-5" fill="none" stroke="#d8d8d8" stroke-width="1.800"/>
<path d="M536 755h7l3 3v9h-10zM539 760h4M539 764h4" fill="none" stroke="#9a9a9a" stroke-width="1.200"/>
<!-- bookmark icons -->
<rect x="1327" y="27" width="16" height="17" rx="1" fill="#2d8cf0"/><path d="M1340 29L1331 36L1335 37L1334 42Z" fill="#fff"/>
<path d="M1395.500 29h6l2 2.500h7v11h-15z" fill="none" stroke="#555" stroke-width="1.400"/>
<rect x="1463" y="27" width="16" height="17" rx="3" fill="#2d8cf0"/><text x="1471" y="40" font-family="Noto Sans CJK SC" font-size="11" fill="#fff" text-anchor="middle">译</text>
<rect x="1529" y="28" width="10" height="15" fill="#0a65b8"/><rect x="1537" y="30" width="9" height="11" fill="#2e9be6"/><text x="1534" y="39" font-family="Liberation Sans" font-size="9" font-weight="bold" fill="#fff" text-anchor="middle">O</text>
<path d="M1609 31A7 7 0 1 0 1609 41" fill="none" stroke="#dc5a38" stroke-width="3"/><circle cx="1606" cy="35" r="2" fill="#dc5a38"/>
<circle cx="1681" cy="35" r="6" fill="none" stroke="#10b58a" stroke-width="2.400"/><path d="M1683 39l4 5" stroke="#10b58a" stroke-width="2.400"/>
<circle cx="1747" cy="36" r="7.500" fill="#e42b24"/><path d="M1741 32C1744 27 1752 27 1754 33L1750 37Z" fill="#2c9a32"/><ellipse cx="1745" cy="40" rx="3.500" ry="2.500" fill="#f6b0b0"/>
<rect x="1829" y="26" width="17" height="18" fill="#3178c6"/><text x="1842" y="42" font-family="Liberation Sans" font-size="8.500" font-weight="bold" fill="#fff" text-anchor="middle">TS</text>
<path d="M1932 27h14v12l-7 5-7-5z" fill="#6348e0"/><circle cx="1939" cy="34" r="3.500" fill="#fff"/>
<circle cx="2013.500" cy="35" r="8" fill="#5f8edc"/><circle cx="2013.500" cy="35" r="4.500" fill="none" stroke="#d4e0f6"/><circle cx="2013.500" cy="35" r="2" fill="#d4e0f6"/>
<path d="M2072 37C2075 42 2082 41 2084 33L2083 26C2082 34 2078 38 2072 37Z" fill="#d8232a"/>
<path d="M2147 26C2143 31 2139 34 2139 38A8 7 0 0 0 2155 38C2155 34 2151 31 2147 26Z" fill="#37aef0"/><path d="M2147 32C2145 35 2144 37 2145 39C2147 42 2151 41 2151 38C2150 36 2148 35 2147 32Z" fill="#e84c3d"/>
<path d="M1381 78L1385.500 82L1390 78" fill="none" stroke="#aaa" stroke-width="1.800"/>
</svg>
</body></html>
